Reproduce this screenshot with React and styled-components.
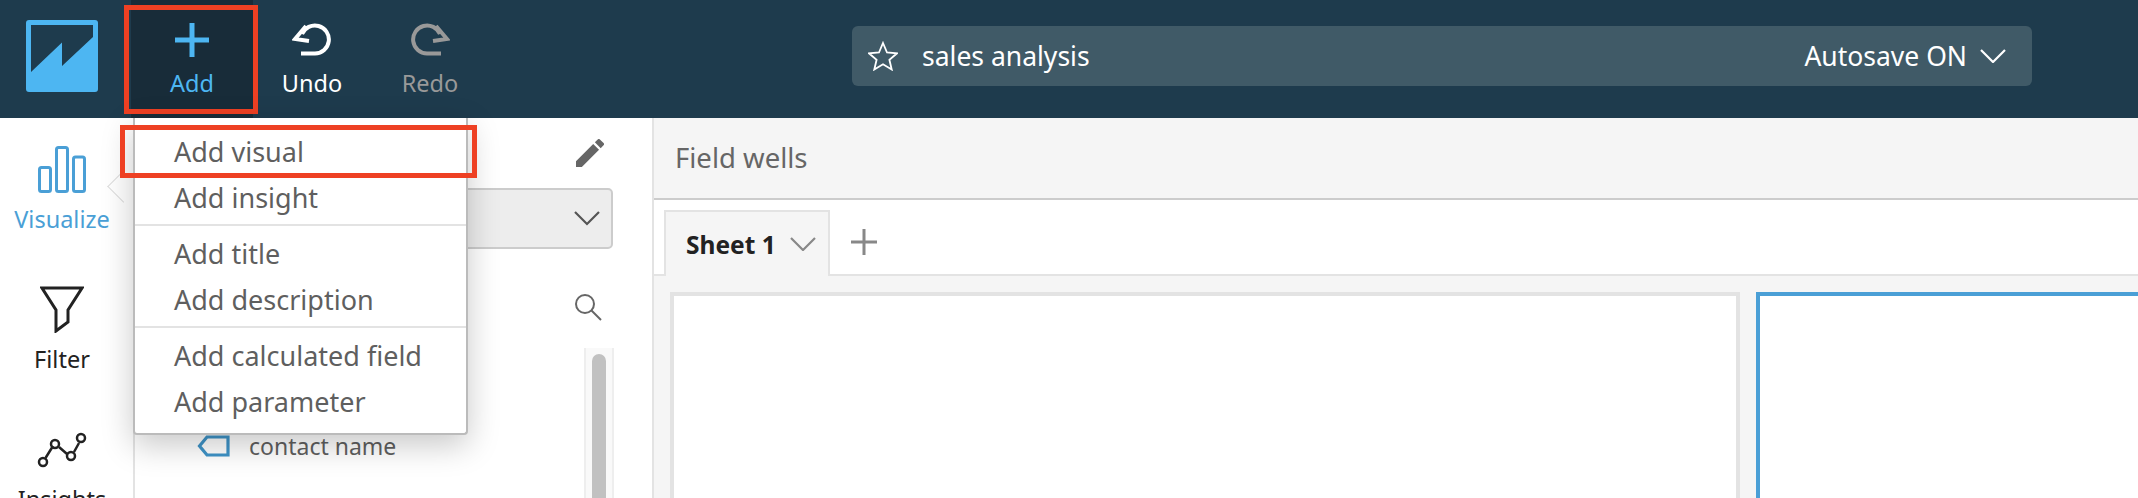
import React from 'react';
import styled, { createGlobalStyle } from 'styled-components';

const GlobalStyle = createGlobalStyle`
  html, body {
    margin: 0;
    height: 100%;
    overflow: hidden;
    background: #fff;
  }
  body {
    font-family: "Noto Sans", "Open Sans", sans-serif;
  }
  #root {
    height: 100%;
  }
`;

const Page = styled.div`
  height: 100%;
  display: flex;
  flex-direction: column;
  overflow: hidden;
`;

const Header = styled.header`
  flex: 0 0 118px;
  display: flex;
  align-items: stretch;
  background: #1e3b4d;
  padding-left: 26px;
`;

const Logo = styled.svg`
  width: 72px;
  height: 72px;
  margin: 20px 33px 0 0;
`;

const ToolButton = styled.div`
  position: relative;
  width: ${(p) => (p.$active ? '122px' : '118px')};
  display: flex;
  flex-direction: column;
  align-items: center;
  padding-top: 22px;
  box-sizing: border-box;
  font-size: 23.5px;
  line-height: 30px;
  color: ${(p) => p.$color};
  background: ${(p) => (p.$active ? '#182c39' : 'transparent')};

  svg {
    height: 36px;
    margin-bottom: 10px;
  }
`;

const RedBox = styled.div`
  position: absolute;
  top: ${(p) => p.$top}px;
  bottom: ${(p) => p.$bottom}px;
  left: ${(p) => p.$left}px;
  right: ${(p) => p.$right}px;
  border: 5px solid #ee4023;
  pointer-events: none;
`;

const TitleBar = styled.div`
  width: 1180px;
  height: 60px;
  margin: 26px 0 0 363px;
  padding: 0 26px 0 16px;
  box-sizing: border-box;
  display: flex;
  align-items: center;
  background: #405a67;
  border-radius: 6px;
  color: #fff;
  font-size: 26.5px;
`;

const TitleText = styled.span`
  margin-left: 24px;
  flex: 1;
`;

const AutosaveText = styled.span`
  margin-right: 13px;
`;

const Body = styled.div`
  position: relative;
  flex: 1;
  display: flex;
  min-height: 0;
`;

const Rail = styled.nav`
  flex: 0 0 135px;
  box-sizing: border-box;
  padding: 28px 9px 0 0;
  border-right: 2px solid #e3e3e3;
`;

const RailItem = styled.div`
  position: relative;
  height: 140px;
  display: flex;
  flex-direction: column;
  align-items: center;
  font-size: 23.5px;
  line-height: 30px;
  color: ${(p) => (p.$active ? '#4a9fd6' : '#222')};

  svg {
    height: 47px;
    margin-bottom: 11px;
  }
`;

const RailPointer = styled.div`
  position: absolute;
  left: 112px;
  top: 29px;
  width: 22px;
  height: 22px;
  background: #fff;
  border-left: 1px solid #ddd;
  border-bottom: 1px solid #ddd;
  transform: rotate(45deg);
`;

const Panel = styled.section`
  flex: 0 0 519px;
  box-sizing: border-box;
  display: flex;
  flex-direction: column;
  padding: 21px 39px 0 20px;
  border-right: 2px solid #e3e3e3;
`;

const IconRow = styled.div`
  display: flex;
  justify-content: flex-end;
  padding-right: ${(p) => p.$inset}px;
  margin-bottom: ${(p) => p.$below}px;
`;

const Select = styled.div`
  height: 61px;
  box-sizing: border-box;
  display: flex;
  align-items: center;
  justify-content: flex-end;
  padding-right: 11px;
  margin-bottom: 44px;
  background: #ededed;
  border: 2px solid #ccc;
  border-radius: 5px;
`;

const FieldArea = styled.div`
  flex: 1;
  display: flex;
  min-height: 0;
`;

const FieldList = styled.div`
  flex: 1;
  padding: 82px 0 0 42px;
`;

const FieldRow = styled.div`
  display: flex;
  align-items: center;
  gap: 19px;
  font-size: 23px;
  line-height: 32px;
  color: #5f5f5f;
`;

const ScrollTrack = styled.div`
  width: 30px;
  box-sizing: border-box;
  margin-right: -1px;
  padding: 6px 6px 0;
  background: #f9f9f9;
  border-left: 2px solid #eee;
  border-right: 2px solid #eee;
`;

const ScrollThumb = styled.div`
  height: 100%;
  background: #c1c1c1;
  border-radius: 8px 8px 0 0;
`;

const Main = styled.main`
  flex: 1;
  min-width: 0;
  display: flex;
  flex-direction: column;
  background: #f5f5f5;
`;

const WellsBar = styled.div`
  flex: 0 0 78px;
  display: flex;
  align-items: center;
  padding: 0 0 2px 21px;
  border-bottom: 2px solid #ccc;
  font-size: 27.5px;
  color: #666;
`;

const TabRow = styled.div`
  flex: 0 0 64px;
  padding: 10px 0 0 10px;
  display: flex;
  align-items: stretch;
  background: #fff;
  border-bottom: 2px solid #e3e3e3;
`;

const Tab = styled.div`
  width: 166px;
  box-sizing: border-box;
  margin-bottom: -2px;
  padding: 0 12px 0 20px;
  display: flex;
  align-items: center;
  justify-content: space-between;
  background: #f5f5f5;
  border: 2px solid #e3e3e3;
  border-bottom: none;
  font-size: 24.5px;
  font-weight: 700;
  color: #222;
`;

const AddTab = styled.svg`
  width: 26px;
  height: 26px;
  margin: 19px 0 0 21px;
`;

const Canvas = styled.div`
  flex: 1;
  min-height: 0;
  display: flex;
  gap: 16px;
  padding: 16px 0 0 16px;
`;

const Card = styled.div`
  ${(p) => (p.$selected ? 'flex: 1;' : 'flex: 0 0 1070px;')}
  box-sizing: border-box;
  background: #fff;
  border: 4px solid ${(p) => (p.$selected ? '#4a9fd6' : '#e3e3e3')};
  border-bottom: none;
  ${(p) => (p.$selected ? 'border-right: none;' : '')}
`;

const Menu = styled.div`
  position: absolute;
  left: 133px;
  top: 0;
  width: 335px;
  box-sizing: border-box;
  padding: 11px 0 8px;
  background: #fff;
  border: 2px solid #bbb;
  border-top: none;
  border-radius: 0 0 4px 4px;
  box-shadow: 0 10px 32px rgba(0, 0, 0, 0.22);
`;

const MenuItem = styled.div`
  position: relative;
  height: 46px;
  padding-left: 39px;
  font-size: 27px;
  line-height: 46px;
  color: #5f5f5f;
`;

const MenuDivider = styled.div`
  height: 2px;
  margin: 3px 0 5px;
  background: #e3e3e3;
`;

const Line = styled.path`
  fill: none;
  stroke: currentColor;
  stroke-width: ${(p) => p.$w || 3};
`;

const UndoPath = () => <Line $w={4} d="M9 31.5H23A14 14 0 1 0 10 12M14 4L3 17L17 19" />;

const Chevron = ({ color, size = 26 }) => (
  <svg width={size} height={size * 0.54} viewBox="0 0 26 14" style={{ color }}>
    <Line $w={2.2} d="M1 1L13 13L25 1" />
  </svg>
);

const App = () => (
  <Page>
    <GlobalStyle />
    <Header>
      <Logo viewBox="0 0 72 72">
        <rect width="72" height="72" rx="3" fill="#4db6f2" />
        <path d="M5 5H67V17L36 46V22.5L5 52Z" fill="#1e3b4d" />
      </Logo>
      <ToolButton $active $color="#4db6f2">
        <svg width="36" viewBox="0 0 36 36">
          <Line $w={5} d="M18 1V35M1 18H35" />
        </svg>
        Add
        <RedBox $top={5} $bottom={4} $left={-7} $right={-5} />
      </ToolButton>
      <ToolButton $color="#fff">
        <svg width="40" viewBox="0 0 40 36">
          <UndoPath />
        </svg>
        Undo
      </ToolButton>
      <ToolButton $color="#999">
        <svg width="40" viewBox="0 0 40 36">
          <g transform="matrix(-1 0 0 1 40 0)">
            <UndoPath />
          </g>
        </svg>
        Redo
      </ToolButton>
      <TitleBar>
        <svg width="30" height="30" viewBox="0 0 30 30" color="#fff">
          <Line $w={1.8} d="M15 2L19 11.5L29 12.3L21.4 18.8L23.7 28.5L15 23.3L6.3 28.5L8.6 18.8L1 12.3L11 11.5Z" />
        </svg>
        <TitleText>sales analysis</TitleText>
        <AutosaveText>Autosave ON</AutosaveText>
        <Chevron color="#fff" />
      </TitleBar>
    </Header>
    <Body>
      <Rail>
        <RailItem $active>
          <svg width="48" viewBox="0 0 48 47">
            <g fill="none" stroke="currentColor" strokeWidth="3">
              <rect x="1.5" y="21.5" width="11" height="24" rx="2" />
              <rect x="18.5" y="1.5" width="11" height="44" rx="2" />
              <rect x="35.5" y="11" width="11" height="34.5" rx="2" />
            </g>
          </svg>
          Visualize
          <RailPointer />
        </RailItem>
        <RailItem>
          <svg width="44" viewBox="0 0 44 47">
            <Line d="M2 2H42L28 24V36L16 45V24Z" />
          </svg>
          Filter
        </RailItem>
        <RailItem>
          <svg width="50" viewBox="1 -3 50 47">
            <Line $w={2.5} d="M9.5 29L17 17M23 18L31 25M38 23L43 14" />
            <g fill="none" stroke="currentColor" strokeWidth="2.5">
              <circle cx="7" cy="33" r="4" />
              <circle cx="19" cy="15" r="4" />
              <circle cx="35" cy="27" r="4" />
              <circle cx="45" cy="9" r="4" />
            </g>
          </svg>
          Insights
        </RailItem>
      </Rail>
      <Panel>
        <IconRow $inset={9} $below={21}>
          <svg width="28" height="28" viewBox="3 3 18 18" fill="#666">
            <path d="M3 17.25V21h3.75L17.81 9.94l-3.75-3.75L3 17.25zM20.71 7.04a1 1 0 000-1.41l-2.34-2.34a1 1 0 00-1.41 0l-1.83 1.83 3.75 3.75 1.83-1.83z" />
          </svg>
        </IconRow>
        <Select>
          <Chevron color="#555" />
        </Select>
        <IconRow $inset={11} $below={27}>
          <svg width="28" height="28" viewBox="0 0 28 28" color="#666">
            <circle cx="11" cy="11" r="9" fill="none" stroke="currentColor" strokeWidth="2" />
            <Line $w={2} d="M17.5 17.5L27 27" />
          </svg>
        </IconRow>
        <FieldArea>
          <FieldList>
            <FieldRow>
              <svg width="33" height="24" viewBox="0 0 33 24" color="#3f94c8">
                <Line $w={3.2} d="M2.5 12L10 3H31V21H10Z" />
              </svg>
              contact name
            </FieldRow>
          </FieldList>
          <ScrollTrack>
            <ScrollThumb />
          </ScrollTrack>
        </FieldArea>
      </Panel>
      <Main>
        <WellsBar>Field wells</WellsBar>
        <TabRow>
          <Tab>
            Sheet 1
            <Chevron color="#888" />
          </Tab>
          <AddTab viewBox="0 0 26 26" color="#888">
            <Line d="M13 0V26M0 13H26" />
          </AddTab>
        </TabRow>
        <Canvas>
          <Card />
          <Card $selected />
        </Canvas>
      </Main>
      <Menu>
        <MenuItem>
          Add visual
          <RedBox $top={-4} $bottom={-3} $left={-15} $right={-11} />
        </MenuItem>
        <MenuItem>Add insight</MenuItem>
        <MenuDivider />
        <MenuItem>Add title</MenuItem>
        <MenuItem>Add description</MenuItem>
        <MenuDivider />
        <MenuItem>Add calculated field</MenuItem>
        <MenuItem>Add parameter</MenuItem>
      </Menu>
    </Body>
  </Page>
);

export default App;
